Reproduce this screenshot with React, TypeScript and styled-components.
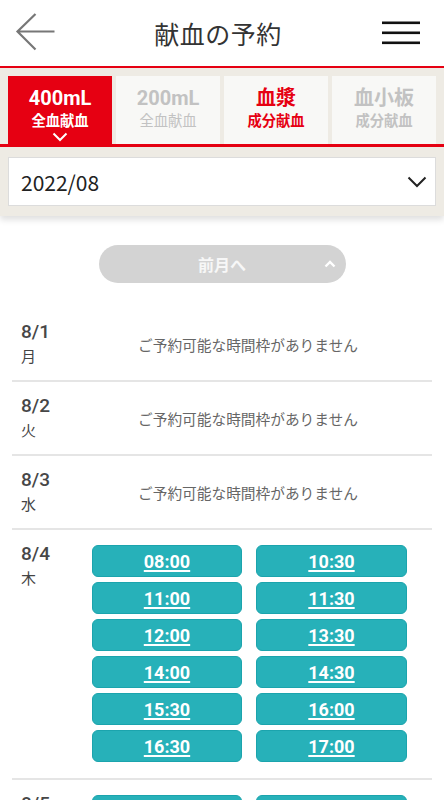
import React from "react";
import styled, { createGlobalStyle } from "styled-components";

const RED = "#e60012";
const BEIGE = "#eeebe4";
const FONT = `Roboto, "Noto Sans CJK JP", "Noto Sans", sans-serif`;

const Global = createGlobalStyle`
  html { scrollbar-width: none; }
  html::-webkit-scrollbar { display: none; }
  body {
    margin: 0;
    background: #fff;
    font-family: ${FONT};
    color: #333;
  }
  * { box-sizing: border-box; }
`;

const Page = styled.div`
  width: 444px;
  display: flex;
  flex-direction: column;
`;

const Header = styled.header`
  height: 68px;
  border-bottom: 2px solid ${RED};
  display: flex;
  align-items: center;
  justify-content: space-between;
  padding: 0 22px 0 14px;
`;

const IconButton = styled.button`
  width: 42px;
  height: 42px;
  padding: 0;
  border: none;
  background: none;
  display: flex;
  align-items: center;
  justify-content: center;
`;

const Title = styled.h1`
  margin: 0;
  font-family: "Noto Sans CJK JP", sans-serif;
  font-weight: 400;
  font-size: 25px;
  color: #333;
  letter-spacing: 0.5px;
`;

const TabBar = styled.nav`
  background: ${BEIGE};
  padding: 8px 8px 0;
  border-bottom: 3px solid ${RED};
  display: grid;
  grid-template-columns: repeat(4, 1fr);
  gap: 4px;
`;

const Tab = styled.div<{ $active?: boolean; $color: string }>`
  height: 68px;
  background: ${(p) => (p.$active ? RED : "#f8f8f6")};
  color: ${(p) => (p.$active ? "#fff" : p.$color)};
  display: flex;
  flex-direction: column;
  align-items: center;
  padding-top: 10px;
  font-family: ${FONT};
`;

const TabMain = styled.div`
  font-size: 20px;
  font-weight: 700;
  line-height: 24px;
`;

const TabSub = styled.div<{ $bold?: boolean }>`
  font-family: "Noto Sans CJK JP", sans-serif;
  font-size: 14.3px;
  font-weight: ${(p) => (p.$bold ? 700 : 400)};
  line-height: 20px;
`;

const TabChevron = styled.svg`
  margin-top: 2px;
`;

const MonthArea = styled.div`
  background: ${BEIGE};
  padding: 10px 8px 10px;
  box-shadow: 0 4px 6px rgba(0, 0, 0, 0.12);
  position: relative;
  z-index: 1;
`;

const MonthSelect = styled.div`
  height: 49px;
  background: #fff;
  border: 1px solid #dcdcdc;
  display: flex;
  align-items: center;
  justify-content: space-between;
  padding: 0 8px 0 12px;
  font-size: 21px;
  color: #222;
  font-family: "Noto Sans CJK JP", sans-serif;
`;

const PrevWrap = styled.div`
  display: flex;
  justify-content: center;
  padding: 29px 0 25px;
`;

const PrevButton = styled.button`
  width: 247px;
  height: 38px;
  border: none;
  border-radius: 19px;
  background: #d3d3d3;
  color: #f7f7f7;
  font-family: "Noto Sans CJK JP", sans-serif;
  font-weight: 700;
  font-size: 16px;
  position: relative;
  display: flex;
  align-items: center;
  justify-content: center;
  padding: 0;
`;

const PrevChevron = styled.svg`
  position: absolute;
  right: 10px;
  top: 15px;
`;

const List = styled.div`
  display: flex;
  flex-direction: column;
  padding: 0 12px;
`;

const DayRow = styled.div`
  display: flex;
  min-height: 74px;
  border-bottom: 2px solid #e5e5e5;
`;

const DateCol = styled.div`
  width: 80px;
  flex-shrink: 0;
  padding: 11px 0 0 9px;
`;

const DateNum = styled.div`
  font-size: 19px;
  font-weight: 500;
  line-height: 26px;
  color: #474747;
`;

const Weekday = styled.div`
  font-family: "Noto Sans CJK JP", sans-serif;
  font-size: 15px;
  line-height: 21px;
  color: #444;
`;

const Message = styled.div`
  align-self: center;
  padding-left: 46px;
  font-family: "Noto Sans CJK JP", sans-serif;
  font-size: 14.7px;
  color: #666;
`;

const SlotGrid = styled.div`
  display: grid;
  grid-template-columns: 150px 151px;
  column-gap: 14px;
  row-gap: 5px;
  padding: 15px 0 16px;
`;

const Slot = styled.a`
  height: 32px;
  border-radius: 6px;
  background: #27b1b9;
  border: 1px solid #1ba4ad;
  color: #fff;
  font-family: Roboto, sans-serif;
  font-weight: 700;
  font-size: 18px;
  text-decoration: underline;
  text-underline-offset: 2px;
  text-decoration-thickness: 1.5px;
  display: flex;
  align-items: center;
  justify-content: center;
`;

type Day = { date: string; wd: string; slots?: string[] };

const days: Day[] = [
  { date: "8/1", wd: "月" },
  { date: "8/2", wd: "火" },
  { date: "8/3", wd: "水" },
  {
    date: "8/4",
    wd: "木",
    slots: ["08:00", "10:30", "11:00", "11:30", "12:00", "13:30", "14:00", "14:30", "15:30", "16:00", "16:30", "17:00"],
  },
  { date: "8/5", wd: "金", slots: ["09:00", "10:00", "11:00", "11:30"] },
];

const tabs = [
  { main: "400mL", sub: "全血献血", color: "#fff", active: true, subBold: true },
  { main: "200mL", sub: "全血献血", color: "#c2c2c2", subBold: false },
  { main: "血漿", sub: "成分献血", color: RED, subBold: true },
  { main: "血小板", sub: "成分献血", color: "#c2c2c2", subBold: true },
];

export default function App() {
  return (
    <Page>
      <Global />
      <Header>
        <IconButton aria-label="戻る">
          <svg width="40" height="40" viewBox="0 0 40 40" fill="none">
            <path d="M2.5 18.5 H39.5 M20.5 1 L2.5 18.5 L20.5 36.5" stroke="#777" strokeWidth="2.2" />
          </svg>
        </IconButton>
        <Title>献血の予約</Title>
        <IconButton aria-label="メニュー">
          <svg width="38" height="24" viewBox="0 0 38 24">
            <rect x="0" y="0.5" width="38" height="2.6" fill="#111" />
            <rect x="0" y="10.5" width="38" height="2.6" fill="#111" />
            <rect x="0" y="20.5" width="38" height="2.6" fill="#111" />
          </svg>
        </IconButton>
      </Header>

      <TabBar>
        {tabs.map((t) => (
          <Tab key={t.main} $active={t.active} $color={t.color}>
            <TabMain>{t.main}</TabMain>
            <TabSub $bold={t.subBold}>{t.sub}</TabSub>
            {t.active && (
              <TabChevron width="16" height="10" viewBox="0 0 16 10" fill="none">
                <path d="M1.5 1.5 L8 8 L14.5 1.5" stroke="#fff" strokeWidth="2" />
              </TabChevron>
            )}
          </Tab>
        ))}
      </TabBar>

      <MonthArea>
        <MonthSelect>
          <span>2022/08</span>
          <svg width="20" height="12" viewBox="0 0 20 12" fill="none">
            <path d="M1.5 1.5 L10 10 L18.5 1.5" stroke="#222" strokeWidth="2" />
          </svg>
        </MonthSelect>
      </MonthArea>

      <PrevWrap>
        <PrevButton>
          前月へ
          <PrevChevron width="12" height="8" viewBox="0 0 12 8" fill="none">
            <path d="M1.5 6.5 L6 2 L10.5 6.5" stroke="#fff" strokeWidth="2.4" />
          </PrevChevron>
        </PrevButton>
      </PrevWrap>

      <List>
        {days.map((d) => (
          <DayRow key={d.date}>
            <DateCol>
              <DateNum>{d.date}</DateNum>
              <Weekday>{d.wd}</Weekday>
            </DateCol>
            {d.slots ? (
              <SlotGrid>
                {d.slots.map((s) => (
                  <Slot key={s} href="#">
                    {s}
                  </Slot>
                ))}
              </SlotGrid>
            ) : (
              <Message>ご予約可能な時間枠がありません</Message>
            )}
          </DayRow>
        ))}
      </List>
    </Page>
  );
}
